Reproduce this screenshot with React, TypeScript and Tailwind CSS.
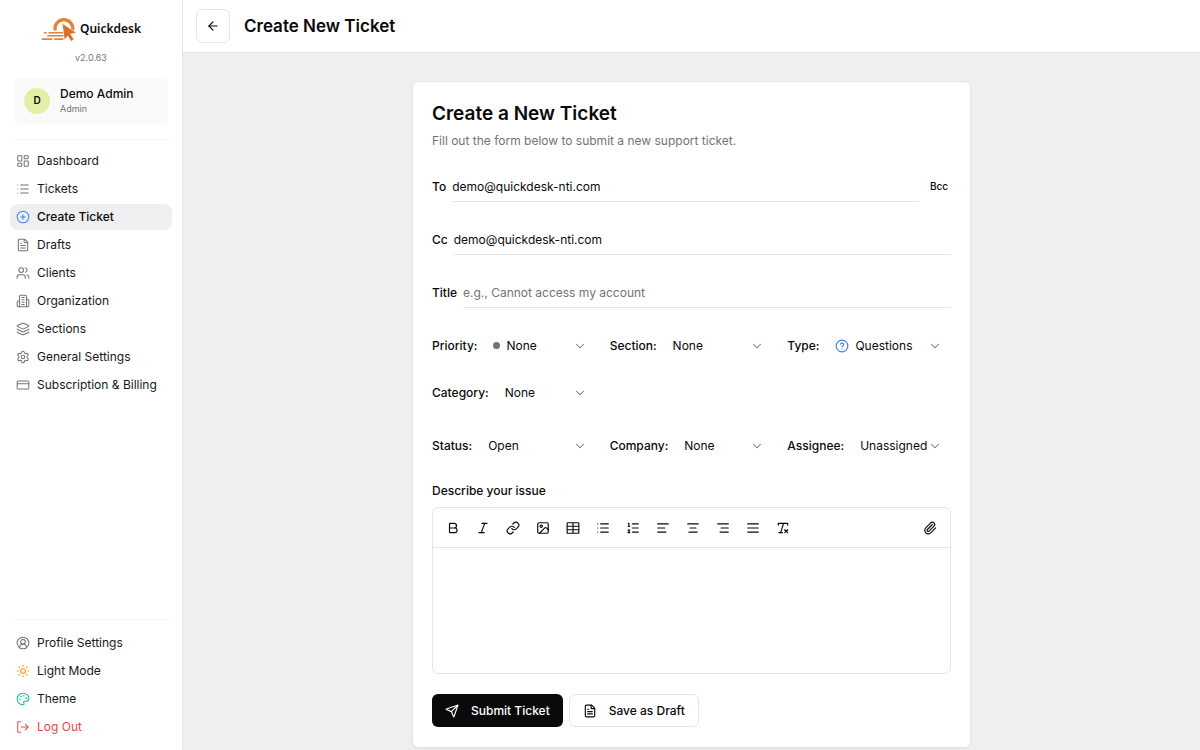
import React from 'react';
import {
  AlignCenter,
  AlignJustify,
  AlignLeft,
  AlignRight,
  ArrowLeft,
  Bold,
  ChevronDown,
  CircleHelp,
  CirclePlus,
  CircleUserRound,
  CreditCard,
  FileText,
  Image as ImageIcon,
  Italic,
  Layers,
  LayoutDashboard,
  Link as LinkIcon,
  List,
  ListOrdered,
  LucideIcon,
  Palette,
  Paperclip,
  RemoveFormatting,
  Send,
  Settings,
  Sun,
  Users,
} from 'lucide-react';

interface IconProps {
  className?: string;
  strokeWidth?: number;
}

type IconType = LucideIcon | React.FC<IconProps>;

interface NavItem {
  label: string;
  icon: IconType;
  iconClass?: string;
  textClass?: string;
  active?: boolean;
}

// Building with three floors
const OrganizationIcon = ({ className, strokeWidth = 1.5 }: IconProps) => (
  <svg
    className={className}
    viewBox="0 0 24 24"
    fill="none"
    stroke="currentColor"
    strokeWidth={strokeWidth}
    strokeLinecap="round"
    strokeLinejoin="round"
  >
    <path d="M6 22V4a2 2 0 0 1 2-2h8a2 2 0 0 1 2 2v18Z" />
    <path d="M6 12H4a2 2 0 0 0-2 2v6a2 2 0 0 0 2 2h2" />
    <path d="M18 9h2a2 2 0 0 1 2 2v9a2 2 0 0 1-2 2h-2" />
    <path d="M10 6h4M10 10h4M10 14h4M10 18h4" />
  </svg>
);

// Door bracket with the arrow starting inside it
const LogOutIcon = ({ className, strokeWidth = 1.5 }: IconProps) => (
  <svg
    className={className}
    viewBox="0 0 24 24"
    fill="none"
    stroke="currentColor"
    strokeWidth={strokeWidth}
    strokeLinecap="round"
    strokeLinejoin="round"
  >
    <path d="M8 3H4a1 1 0 0 0-1 1v16a1 1 0 0 0 1 1h4" />
    <path d="M9 12h12M16 7l5 5-5 5" />
  </svg>
);

// Table with square corners
const TableIcon = ({ className, strokeWidth = 2 }: IconProps) => (
  <svg className={className} viewBox="0 0 24 24" fill="none" stroke="currentColor" strokeWidth={strokeWidth}>
    <rect x="2" y="3" width="20" height="18" rx="1" />
    <path d="M2 9h20M2 15h20M12 3v18" />
  </svg>
);

const mainNav: NavItem[] = [
  { label: 'Dashboard', icon: LayoutDashboard },
  { label: 'Tickets', icon: List },
  { label: 'Create Ticket', icon: CirclePlus, iconClass: 'text-[#3b82f6]', active: true },
  { label: 'Drafts', icon: FileText },
  { label: 'Clients', icon: Users },
  { label: 'Organization', icon: OrganizationIcon },
  { label: 'Sections', icon: Layers },
  { label: 'General Settings', icon: Settings },
  { label: 'Subscription & Billing', icon: CreditCard },
];

const bottomNav: NavItem[] = [
  { label: 'Profile Settings', icon: CircleUserRound },
  { label: 'Light Mode', icon: Sun, iconClass: 'text-[#f59e0b]' },
  { label: 'Theme', icon: Palette, iconClass: 'text-[#14b8a6]' },
  { label: 'Log Out', icon: LogOutIcon, iconClass: 'text-[#ef4444]', textClass: 'text-[#ef4444]' },
];

const tools = [
  { label: 'Bold', icon: Bold },
  { label: 'Italic', icon: Italic },
  { label: 'Link', icon: LinkIcon },
  { label: 'Image', icon: ImageIcon },
  { label: 'Table', icon: TableIcon },
  { label: 'Bullet list', icon: List },
  { label: 'Numbered list', icon: ListOrdered },
  { label: 'Align left', icon: AlignLeft },
  { label: 'Align center', icon: AlignCenter },
  { label: 'Align right', icon: AlignRight },
  { label: 'Justify', icon: AlignJustify },
  { label: 'Clear formatting', icon: RemoveFormatting },
];

const Logo = () => (
  <div className="flex items-center justify-center gap-1">
    <svg viewBox="128 50 106 75" className="h-[26px] w-[35px]" fill="none">
      <path d="M171 92a27 27 0 1 1 53-1" stroke="#e58237" strokeWidth="10" />
      <path d="M137 99h8M151 99h45M147 108h50M130 118h32M168 118h28" stroke="#e58237" strokeWidth="5" />
      <path d="M192 70l44 29-18 4 10 16-9 6-10-16-10 13Z" fill="#dd6f2c" stroke="#fff" strokeWidth="2" />
    </svg>
    <span className="font-['Noto_Sans'] text-xs leading-[26px] font-semibold text-neutral-950">Quickdesk</span>
  </div>
);

const NavList = ({ items }: { items: NavItem[] }) => (
  <ul className="flex flex-col gap-0.5">
    {items.map(({ label, icon: Icon, iconClass, textClass, active }) => (
      <li key={label}>
        <a
          href="#"
          className={`flex h-[26px] items-center gap-[7px] rounded-lg px-1.5 whitespace-nowrap ${
            active ? 'bg-[#efefef] font-medium text-neutral-950' : ''
          } ${textClass ?? 'text-neutral-900'}`}
        >
          <Icon className={`size-3.5 shrink-0 ${iconClass ?? 'text-neutral-500'}`} strokeWidth={1.75} />
          {label}
        </a>
      </li>
    ))}
  </ul>
);

interface SelectFieldProps {
  id: string;
  label: string;
  value: string;
  prefix?: React.ReactNode;
}

const SelectField = ({ id, label, value, prefix }: SelectFieldProps) => (
  <div className="flex h-[31px] items-center">
    <label htmlFor={id} className="shrink-0 font-medium">
      {label}:
    </label>
    <div className="relative ml-4 flex h-full min-w-0 flex-1 items-center gap-1.5">
      {prefix}
      <select id={id} className="h-full min-w-0 flex-1 appearance-none bg-transparent outline-none">
        <option>{value}</option>
      </select>
      <ChevronDown className="pointer-events-none absolute right-[9px] size-3.5 text-neutral-500" strokeWidth={1.75} />
    </div>
  </div>
);

const Sidebar = () => (
  <aside className="flex w-[183px] shrink-0 flex-col border-r border-neutral-200 bg-white px-2.5 pt-4 pb-2.5">
    <Logo />
    <p className="mt-2 text-center text-[9px] leading-4 text-neutral-500">v2.0.63</p>

    <div className="mx-1 mt-3 flex h-[46px] items-center gap-2.5 rounded-md bg-neutral-50 px-2.5">
      <div className="flex size-[26px] items-center justify-center rounded-full bg-[#e4efa5] text-[10px] font-semibold">
        D
      </div>
      <div>
        <p className="leading-4 font-medium">Demo Admin</p>
        <p className="text-[9px] leading-[14px] text-neutral-500">Admin</p>
      </div>
    </div>

    <nav className="mt-[15px] flex flex-1 flex-col justify-between">
      <div>
        <hr className="mx-0.5 mb-2 border-neutral-100" />
        <NavList items={mainNav} />
      </div>
      <div>
        <hr className="mx-0.5 mb-2.5 border-neutral-100" />
        <NavList items={bottomNav} />
      </div>
    </nav>
  </aside>
);

const TicketForm = () => (
  <form className="mx-auto w-full max-w-[559px] rounded-md border border-neutral-200 bg-white px-[19px] pt-5 pb-5 shadow-xs">
    <h2 className="text-[19px] leading-6 font-semibold">Create a New Ticket</h2>
    <p className="mt-[5px] leading-5 text-neutral-500">Fill out the form below to submit a new support ticket.</p>

    <div className="mt-5 flex flex-col gap-[22px]">
      <div className="flex h-[31px] items-center">
        <label htmlFor="to" className="font-medium">
          To
        </label>
        <input
          id="to"
          type="email"
          defaultValue="demo@quickdesk-nti.com"
          className="ml-1.5 h-full min-w-0 flex-1 border-b border-neutral-200 outline-none"
        />
        <button type="button" className="ml-2 px-[3px] text-[10px] font-medium">
          Bcc
        </button>
      </div>

      <div className="flex h-[31px] items-center">
        <label htmlFor="cc" className="font-medium">
          Cc
        </label>
        <input
          id="cc"
          type="email"
          defaultValue="demo@quickdesk-nti.com"
          className="ml-1.5 h-full min-w-0 flex-1 border-b border-neutral-200 outline-none"
        />
      </div>

      <div className="flex h-[31px] items-center">
        <label htmlFor="title" className="font-medium">
          Title
        </label>
        <input
          id="title"
          type="text"
          placeholder="e.g., Cannot access my account"
          className="ml-1.5 h-full min-w-0 flex-1 border-b border-neutral-200 outline-none placeholder:text-neutral-500"
        />
      </div>

      <div className="grid grid-cols-3 gap-x-3.5 gap-y-4">
        <SelectField
          id="priority"
          label="Priority"
          value="None"
          prefix={<span className="size-[7px] shrink-0 rounded-full bg-neutral-500" />}
        />
        <SelectField id="section" label="Section" value="None" />
        <SelectField
          id="type"
          label="Type"
          value="Questions"
          prefix={<CircleHelp className="size-3.5 shrink-0 text-[#3b82f6]" strokeWidth={2} />}
        />
        <SelectField id="category" label="Category" value="None" />
      </div>

      <div className="grid grid-cols-3 gap-x-3.5">
        <SelectField id="status" label="Status" value="Open" />
        <SelectField id="company" label="Company" value="None" />
        <SelectField id="assignee" label="Assignee" value="Unassigned" />
      </div>

      <div>
        <label htmlFor="issue" className="block leading-4 font-medium">
          Describe your issue
        </label>
        <div className="mt-2 rounded-md border border-neutral-200">
          <div className="flex h-10 items-center border-b border-neutral-200 px-[5px]">
            {tools.map(({ label, icon: Icon }) => (
              <button key={label} type="button" aria-label={label} className="flex h-7 w-[30px] items-center justify-center">
                <Icon className="size-3.5" strokeWidth={2} />
              </button>
            ))}
            <button type="button" aria-label="Attach file" className="ml-auto flex h-7 w-[30px] items-center justify-center">
              <Paperclip className="size-3.5" strokeWidth={2} />
            </button>
          </div>
          <textarea id="issue" className="block h-[125px] w-full resize-none p-3 outline-none" />
        </div>
      </div>
    </div>

    <div className="mt-5 flex gap-1.5">
      <button
        type="submit"
        className="flex h-[33px] items-center gap-3 rounded-md bg-neutral-950 px-[13px] font-medium text-white"
      >
        <Send className="size-3.5" strokeWidth={2} />
        Submit Ticket
      </button>
      <button
        type="button"
        className="flex h-[33px] items-center gap-3 rounded-md border border-neutral-200 px-[13px] font-medium"
      >
        <FileText className="size-3.5" strokeWidth={2} />
        Save as Draft
      </button>
    </div>
  </form>
);

const App: React.FC = () => {
  return (
    <div className="flex min-h-screen bg-[#efefef] font-['Inter',sans-serif] text-xs text-neutral-950">
      <Sidebar />
      <div className="flex min-w-0 flex-1 flex-col">
        <header className="flex h-[53px] items-center gap-3.5 border-b border-neutral-200 bg-white px-[13px]">
          <button
            type="button"
            aria-label="Back"
            className="flex size-[34px] items-center justify-center rounded-md border border-neutral-200"
          >
            <ArrowLeft className="size-3.5" strokeWidth={2} />
          </button>
          <h1 className="text-[17px] font-semibold">Create New Ticket</h1>
        </header>
        <main className="flex-1 px-6 pt-7">
          <TicketForm />
        </main>
      </div>
    </div>
  );
};

export default App;
